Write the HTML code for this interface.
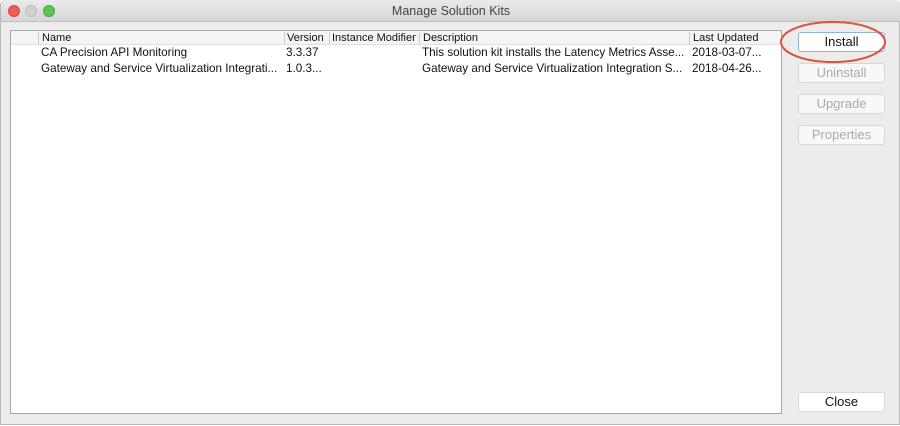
<!DOCTYPE html>
<html><head><style>
*{margin:0;padding:0;box-sizing:border-box}
body{width:900px;height:426px;background:#fff;font-family:"Liberation Sans",sans-serif;font-size:11.7px;color:#111;position:relative;overflow:hidden}
.win{position:absolute;left:0;top:0;width:900px;height:425px;background:#ececec;border:1px solid #b8b8b8;border-top:none;border-radius:5px 5px 0 0}
.title{position:absolute;left:0;top:0;width:900px;height:22px;background:linear-gradient(#ebebeb,#d6d6d6);border-bottom:1px solid #c0c0c0;border-radius:5px 5px 0 0;text-align:center;line-height:22px;font-size:12.5px;color:#444}
.dot{position:absolute;top:5px;width:12px;height:12px;border-radius:50%}
.tbl{position:absolute;left:9px;top:30px;width:772px;height:384px;background:#fff;border:1px solid #a8a8a8}
.hdr{position:absolute;left:0;top:0;width:770px;height:14px;background:#f4f4f4;border-bottom:1px solid #e0e0e0;font-size:11px}
.t{position:absolute;white-space:nowrap;line-height:14px}
.sep{position:absolute;top:1px;width:1px;height:12px;background:#cfcfcf}
.btn{position:absolute;left:797px;width:87px;height:20px;background:#f8f8f8;border:1px solid #d8d8d8;border-radius:3px;text-align:center;line-height:18px;font-size:13px;color:#aaa}
</style></head><body>
<div class="win">
<div class="title">Manage Solution Kits
<div class="dot" style="left:7px;background:#ee5c55;border:1px solid #d8463f"></div>
<div class="dot" style="left:24px;background:#d0d0d0;border:1px solid #bdbdbd"></div>
<div class="dot" style="left:42px;background:#5fc453;border:1px solid #4aa83e"></div>
</div>
<div class="tbl">
<div class="hdr">
<div class="sep" style="left:27px"></div><div class="t" style="left:31px;top:0">Name</div>
<div class="sep" style="left:273px"></div><div class="t" style="left:276px;top:0">Version</div>
<div class="sep" style="left:318px"></div><div class="t" style="left:321px;top:0">Instance Modifier</div>
<div class="sep" style="left:408px"></div><div class="t" style="left:412px;top:0">Description</div>
<div class="sep" style="left:678px"></div><div class="t" style="left:682px;top:0">Last Updated</div>
</div>
<div class="t" style="left:30px;top:15px">CA Precision API Monitoring</div>
<div class="t" style="left:275px;top:15px">3.3.37</div>
<div class="t" style="left:411px;top:15px">This solution kit installs the Latency Metrics Asse...</div>
<div class="t" style="left:681px;top:15px">2018-03-07...</div>
<div class="t" style="left:30px;top:31px">Gateway and Service Virtualization Integrati...</div>
<div class="t" style="left:275px;top:31px">1.0.3...</div>
<div class="t" style="left:411px;top:31px">Gateway and Service Virtualization Integration S...</div>
<div class="t" style="left:681px;top:31px">2018-04-26...</div>
</div>
<div class="btn" style="top:32px;color:#111;background:#fff;border-color:#8fb4e0">Install</div>
<div class="btn" style="top:63px">Uninstall</div>
<div class="btn" style="top:94px">Upgrade</div>
<div class="btn" style="top:125px">Properties</div>
<div class="btn" style="top:392px;color:#111;background:#fff">Close</div>
<svg style="position:absolute;left:776px;top:18px" width="124" height="48"><ellipse cx="56" cy="24" rx="52" ry="20" fill="none" stroke="#d9553c" stroke-width="2"/></svg>
</div>
</body></html>
